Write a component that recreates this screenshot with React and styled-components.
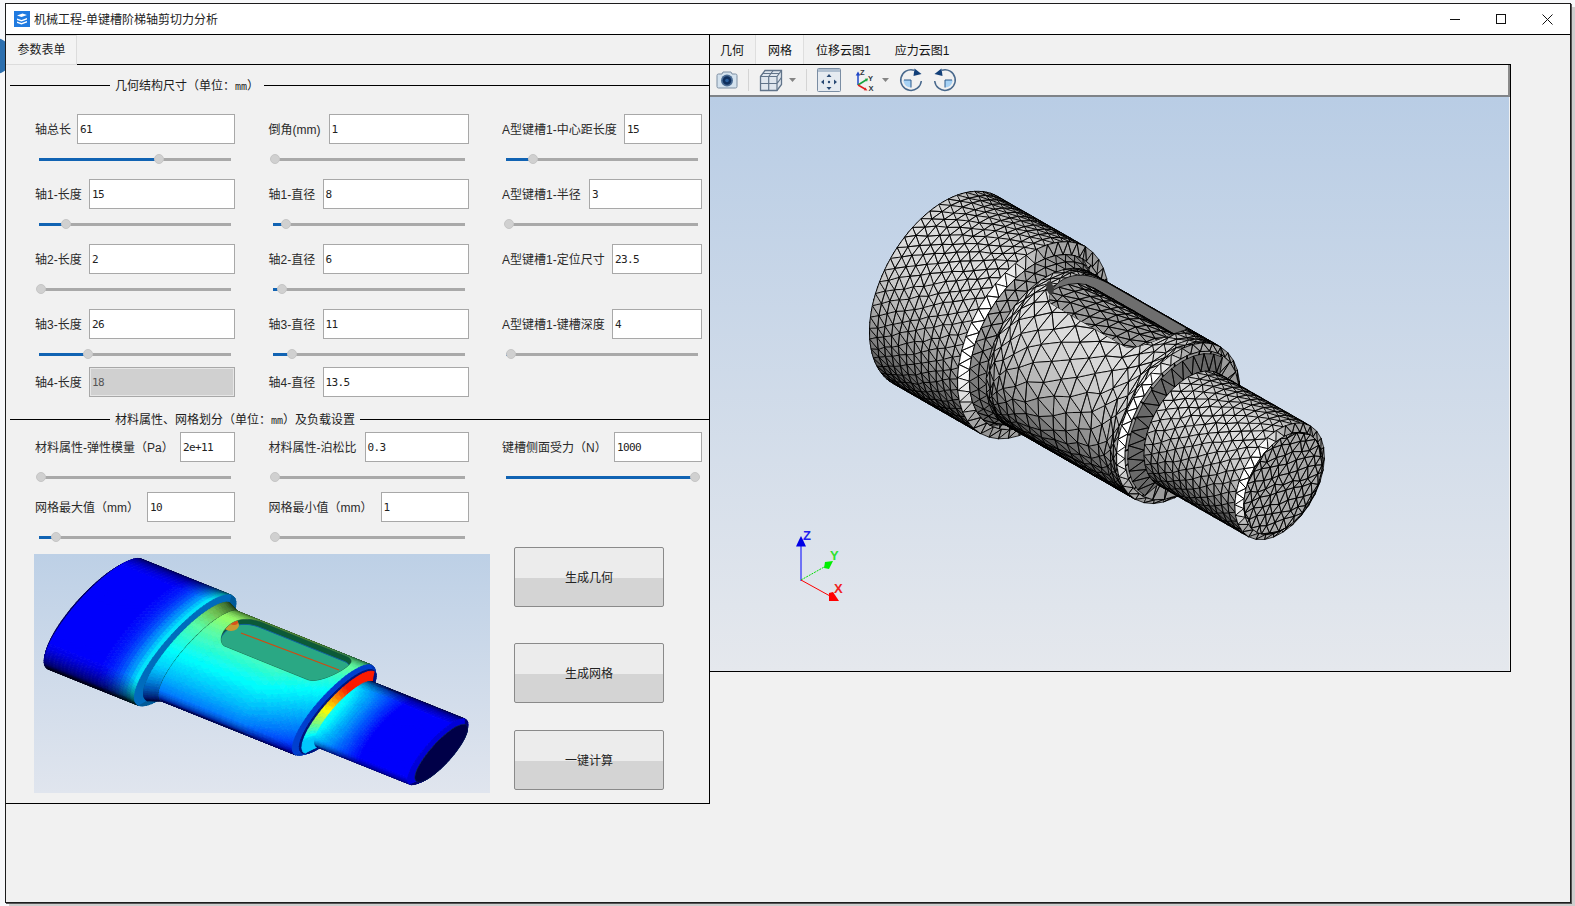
import React from 'react';
import styled, { createGlobalStyle } from 'styled-components';

const FONT = '"Liberation Sans", "Noto Sans CJK SC", sans-serif';

const GlobalStyle = createGlobalStyle`
	html, body {
		margin: 0;
		width: 1575px;
		height: 906px;
		overflow: hidden;
		background: #f7f8fa;
		font-family: ${FONT};
		font-size: 12px;
		color: #1c1c1c;
	}
	* {
		box-sizing: border-box;
	}
`;

const Desktop = styled.div`
	position: relative;
	width: 1575px;
	height: 906px;
	padding: 3px 0 0 5px;
`;

const DesktopBlob = styled.div`
	position: absolute;
	left: -22px;
	top: 38px;
	width: 34px;
	height: 36px;
	border-radius: 50%;
	background: #2c6fae;
`;

const Window = styled.div`
	position: relative;
	display: flex;
	flex-direction: column;
	width: 1566px;
	height: 900px;
	border: 1px solid #1c1c1c;
	background: #f1f1f1;
	box-shadow: 1px 1px 0 #555, 4px 4px 0 #cdcdcd;
`;

const TitleBar = styled.div`
	display: flex;
	align-items: center;
	flex: none;
	height: 31px;
	padding-left: 8px;
	background: #fff;
	border-bottom: 1px solid #000;
`;

const AppIcon = styled.svg`
	flex: none;
	width: 16px;
	height: 16px;
	margin-right: 4px;
`;

const TitleText = styled.span`
	padding-bottom: 2px;
	font-size: 12px;
	color: #222;
`;

const CaptionButtons = styled.div`
	display: flex;
	margin-left: auto;
`;

const CaptionButton = styled.div`
	display: flex;
	align-items: center;
	justify-content: center;
	width: 46px;
	height: 30px;
`;

const WindowBody = styled.div`
	display: flex;
	flex: 1;
	min-height: 0;
`;

const FormPanel = styled.div`
	flex: none;
	width: 704px;
	height: 769px;
	border-right: 1px solid #000;
	border-bottom: 1px solid #000;
`;

const FormTabBar = styled.div`
	display: flex;
	height: 30px;
	border-bottom: 1px solid #000;
`;

const FormTab = styled.div`
	display: flex;
	align-items: center;
	justify-content: center;
	width: 71px;
	height: 30px;
	padding: 0 0 3px 1px;
	background: #f3f3f3;
	border: 1px solid #dcdcdc;
	border-left: none;
	font-size: 12px;
`;

const Legend = styled.div`
	display: flex;
	align-items: center;
	height: 16px;
	margin: ${(p) => p.$top}px 0 0 4px;
`;

const LegendRule = styled.div`
	flex: ${(p) => (p.$grow ? 1 : 'none')};
	width: 100px;
	height: 1px;
	background: #000;
`;

const LegendText = styled.div`
	padding: 0 5px 2px;
	font-size: 12px;
	white-space: nowrap;
`;

const Mm = styled.span`
	font-family: "DejaVu Sans Mono", monospace;
	font-size: 10px;
	color: #1c1c1c;
`;

const FieldGrid = styled.div`
	display: grid;
	grid-template-columns: repeat(3, 200px);
	grid-template-rows: ${(p) => p.$rows};
	column-gap: 33.5px;
	margin-top: ${(p) => p.$top}px;
	padding-left: 29px;
`;

const Field = styled.div`
	display: flex;
	flex-direction: column;
`;

const FieldTop = styled.div`
	display: flex;
	align-items: center;
	height: 30px;
`;

const FieldLabel = styled.div`
	flex: none;
	width: ${(p) => p.$width}px;
	padding-bottom: 2px;
	font-size: 12px;
	color: #2a2a2a;
	white-space: nowrap;
`;

const ValueBox = styled.div`
	flex: 1;
	height: 30px;
	padding: 0 2px;
	line-height: 29px;
	font-family: "DejaVu Sans Mono", monospace;
	font-size: 11px;
	letter-spacing: -0.6px;
	background: ${(p) => (p.$disabled ? '#d0d0d0' : '#fff')};
	border: 1px solid #a8a8a8;
	box-shadow: ${(p) => (p.$disabled ? 'inset 0 0 0 1px #e6e6e6' : 'none')};
	color: ${(p) => (p.$disabled ? '#555' : '#222')};
`;

const SliderTrack = styled.div`
	position: relative;
	height: 3px;
	margin: 13.5px 4px 0;
	background: linear-gradient(to right, #1163b3 ${(p) => p.$at}px, #a9a9a9 ${(p) => p.$at}px);
`;

const SliderThumb = styled.div`
	position: absolute;
	top: -3.5px;
	left: ${(p) => p.$at - 5}px;
	width: 10px;
	height: 10px;
	border-radius: 50%;
	background: #d0d0d0;
	border: 1px solid #c6c6c6;
`;

const BottomArea = styled.div`
	display: flex;
	padding-left: 28px;
`;

const PreviewBox = styled.div`
	flex: none;
	width: 456px;
	height: 239px;
	margin-top: 7px;
	background: linear-gradient(#bdd0e6, #e0e5ee);
`;

const ActionColumn = styled.div`
	display: flex;
	flex-direction: column;
	margin-left: 24px;
`;

const ActionButton = styled.div`
	display: flex;
	align-items: center;
	justify-content: center;
	width: 150px;
	height: 60px;
	margin-top: ${(p) => p.$top}px;
	padding-bottom: 2px;
	border: 1px solid #8a8a8a;
	border-radius: 2px;
	background: linear-gradient(#ececec 0, #ececec 52%, #d4d4d4 52%, #d4d4d4 100%);
	font-size: 12px;
	color: #222;
`;

const ViewColumn = styled.div`
	display: flex;
	flex-direction: column;
	flex: none;
	width: 801px;
`;

const ViewTabBar = styled.div`
	display: flex;
	gap: 1px;
	height: 29px;
	margin-left: -2px;
`;

const ViewTab = styled.div`
	display: flex;
	align-items: center;
	height: 29px;
	padding: 0 11px 1px 12px;
	font-size: 12px;
	color: #111;
	background: ${(p) => (p.$active ? '#f5f5f5' : 'transparent')};
	border-left: 1px solid ${(p) => (p.$active ? '#dedede' : 'transparent')};
	border-right: 1px solid ${(p) => (p.$active ? '#dedede' : 'transparent')};
	margin: 0 -1px;
`;

const ViewFrame = styled.div`
	display: flex;
	flex-direction: column;
	width: 801px;
	height: 608px;
	border-top: 1px solid #000;
	border-right: 1px solid #000;
	border-bottom: 1px solid #000;
`;

const Toolbar = styled.div`
	display: flex;
	align-items: center;
	flex: none;
	height: 32px;
	padding-left: 5px;
	background: #f1f1f1;
	border-right: 2px solid #8a8a8a;
	border-bottom: 2px solid #7f8388;
`;

const ToolSeparator = styled.div`
	flex: none;
	width: 1px;
	height: 22px;
	margin-left: ${(p) => p.$left}px;
	background: #d4d4d4;
`;

const Tool = styled.svg`
	flex: none;
	width: ${(p) => p.$width || 24}px;
	height: 24px;
	margin-left: ${(p) => p.$left || 0}px;
`;

const Viewport = styled.div`
	flex: 1;
	min-height: 0;
	margin-right: 1px;
	background: linear-gradient(#b9cde5, #e5e8ed);
`;

const Drawing = styled.svg`
	display: block;
	width: 100%;
	height: 100%;
`;

/* ---- stepped shaft, drawn from a small parametric model ---- */

const TAU = Math.PI * 2;
const clamp = (v, a = 0, b = 1) => Math.min(b, Math.max(a, v));

const meshView = { o: [936.7, 285], a: [5.64, 3.23], u: [7.75, -13.85], k: [8.1, 4.64] };
const colorView = { o: [86.3, 610.7], a: [5.78, 2.32], u: [6.9, -8.15], k: [3.0, 1.2] };

const project = (v, s, r, th) => [
	v.o[0] + s * v.a[0] + r * Math.cos(th) * v.u[0] - r * Math.sin(th) * v.k[0],
	v.o[1] + s * v.a[1] + r * Math.cos(th) * v.u[1] - r * Math.sin(th) * v.k[1],
];

const seeded = (seed) => () => {
	seed = (seed * 16807) % 2147483647;
	return seed / 2147483647 - 0.5;
};

const fmt = (p) => `${p[0].toFixed(1)} ${p[1].toFixed(1)}`;

const addTri = (groups, fill, a, b, c) => {
	groups.set(fill, (groups.get(fill) || '') + `M${fmt(a)}L${fmt(b)}L${fmt(c)}Z`);
};

const buildStrip = (view, part, density, paint, wobble, rnd) => {
	const { id, s0, s1, r0, r1, full, ns, nt, bunch } = part;
	const rows = Math.max(1, Math.round(ns * density));
	const cols = Math.round(nt * density);
	const span = full ? TAU : Math.PI;
	const mapS = (t) => (bunch ? t - 0.11 * Math.sin(TAU * t) : t);
	const mapT = (t) => (bunch ? t - 0.09 * Math.sin(TAU * t) : t);
	const grid = [];
	for (let i = 0; i <= rows; i++) {
		const line = [];
		for (let j = 0; j <= cols + 1; j++) {
			const idx = clamp((i % 2 ? j - 0.5 : j) / cols);
			const inner = i > 0 && i < rows && idx > 0 && idx < 1;
			const t = mapS(i / rows) + (inner ? (rnd() * wobble) / rows : 0);
			const th = span * (mapT(idx) + (inner ? (rnd() * wobble) / cols : 0));
			line.push({ s: s0 + (s1 - s0) * t, r: r0 + (r1 - r0) * t, th });
		}
		grid.push(line);
	}
	const groups = new Map();
	const put = (a, b, c) => {
		if (a.th === b.th && b.th === c.th) return;
		const th = (a.th + b.th + c.th) / 3;
		const s = (a.s + b.s + c.s) / 3;
		addTri(groups, paint(id, th, s), project(view, a.s, a.r, a.th), project(view, b.s, b.r, b.th), project(view, c.s, c.r, c.th));
	};
	for (let i = 0; i < rows; i++) {
		for (let j = 0; j <= cols; j++) {
			const p = grid[i];
			const q = grid[i + 1];
			if (i % 2 === 0) {
				put(p[j], p[j + 1], q[j + 1]);
				put(q[j], q[j + 1], p[j]);
			} else {
				put(p[j], p[j + 1], q[j]);
				put(q[j], q[j + 1], p[j + 1]);
			}
		}
	}
	return groups;
};

// triangles on a flat plane, pulled onto a circle at the rim (end cap)
const buildCap = (view, s, radius, cell, paint, rnd) => {
	const groups = new Map();
	const n = Math.ceil(radius / cell) + 1;
	const table = {};
	const at = (ix, iy) => {
		const key = `${ix},${iy}`;
		if (!table[key]) {
			let x = (ix + (iy % 2 ? 0.5 : 0)) * cell + rnd() * 0.35 * cell;
			let y = iy * cell * 0.87 + rnd() * 0.35 * cell;
			const d = Math.hypot(x, y);
			const out = d > radius;
			if (out) {
				x = (x / d) * radius;
				y = (y / d) * radius;
			}
			table[key] = { out, p: project(view, s, Math.hypot(x, y), Math.atan2(y, x)) };
		}
		return table[key];
	};
	const fill = paint('cap', 0, s);
	const put = (a, b, c) => {
		if (a.out && b.out && c.out) return;
		addTri(groups, fill, a.p, b.p, c.p);
	};
	for (let iy = -n; iy < n; iy++) {
		for (let ix = -n; ix < n; ix++) {
			if (iy % 2 !== 0) {
				put(at(ix, iy), at(ix + 1, iy), at(ix + 1, iy + 1));
				put(at(ix, iy), at(ix + 1, iy + 1), at(ix, iy + 1));
			} else {
				put(at(ix, iy), at(ix + 1, iy), at(ix, iy + 1));
				put(at(ix + 1, iy), at(ix + 1, iy + 1), at(ix, iy + 1));
			}
		}
	}
	return groups;
};

const shaftParts = [
	{ id: 'rear', s0: 1, s1: 1.5, r0: 6.2, r1: 6.75, ns: 1, nt: 26 },
	{ id: 'cyl', s0: 1.5, s1: 17.1, r0: 6.75, r1: 6.75, ns: 12, nt: 26 },
	{ id: 'bright', s0: 17.1, s1: 17.7, r0: 6.75, r1: 6, ns: 1, nt: 44, full: true },
	{ id: 'face', s0: 17.7, s1: 17.7, r0: 6, r1: 4.6, ns: 1, nt: 36, full: true },
	{ id: 'neck', s0: 17.7, s1: 19.7, r0: 6, r1: 5.5, ns: 2, nt: 20 },
	{ id: 'mid', s0: 19.7, s1: 42.8, r0: 5.5, r1: 5.5, ns: 16, nt: 20, bunch: true },
	{ slot: true },
	{ id: 'bright2', s0: 42.8, s1: 43.5, r0: 5.5, r1: 5.1, ns: 1, nt: 36, full: true },
	{ id: 'face2', s0: 43.5, s1: 43.5, r0: 5.1, r1: 3, ns: 1, nt: 28, full: true },
	{ id: 'groove', s0: 43.8, s1: 44.7, r0: 5, r1: 4, ns: 1, nt: 16 },
	{ id: 'end', s0: 44.7, s1: 60.8, r0: 4, r1: 4, ns: 13, nt: 16 },
	{ id: 'bright3', s0: 60.8, s1: 61.4, r0: 4, r1: 3.5, ns: 1, nt: 30, full: true },
	{ cap: true, s: 61.4, r: 3.5 },
];

const grayFill = (g) => {
	const v = clamp(Math.round(g / 5) * 5, 0, 255);
	return `rgb(${v},${v},${v})`;
};

const cylLight = (th) => clamp(Math.cos(th - 1.22));

const meshPaint = (id, th) => {
	switch (id) {
		case 'rear':
			return grayFill(80 + 60 * cylLight(th));
		case 'bright':
		case 'bright2':
		case 'bright3': {
			if (th > Math.PI) return grayFill(150 - 25 * Math.sin(th));
			const lit = clamp(Math.cos(th - 1.75) * 2.2 - 1);
			return grayFill(165 + 95 * lit);
		}
		case 'face':
		case 'face2':
			return grayFill(155);
		case 'cap':
			return grayFill(172);
		case 'neck':
			return grayFill(95 + 70 * cylLight(th));
		case 'groove':
			return grayFill(105);
		default:
			return grayFill(75 + 145 * cylLight(th));
	}
};

const jet = (v) => [
	clamp(1.5 - Math.abs(4 * v - 3)),
	clamp(1.5 - Math.abs(4 * v - 2)),
	clamp(1.5 - Math.abs(4 * v - 1)),
];

const jetFill = (v, light) => {
	const c = jet(v).map((x) => clamp(Math.round((x * light * 255) / 9) * 9, 0, 255));
	return `rgb(${c[0]},${c[1]},${c[2]})`;
};

const midValue = (th, s) => {
	const t = th / Math.PI;
	const fade = clamp((s - 34) / 9) * 0.06;
	return Math.min(0.52, 0.62 - 0.46 * t) - fade;
};

const colorPaint = (id, th, s) => {
	const t = th / Math.PI;
	const light = clamp(0.1 + 1.3 * Math.max(0, Math.cos(th - 1.45)));
	switch (id) {
		case 'rear':
			return jetFill(0.125, 0.4);
		case 'cyl': {
			const rise = clamp((s - 10) / 7);
			return jetFill(0.125 + 0.24 * rise * rise, light);
		}
		case 'bright':
			return jetFill(0.27, th > Math.PI ? 0.6 : 0.75);
		case 'face':
			return jetFill(0.28, 0.6);
		case 'neck':
			return jetFill(midValue(th, s), clamp(0.2 + 0.9 * Math.sin(th)));
		case 'mid':
			return jetFill(midValue(th, s), clamp(0.3 + 1.3 * Math.sin(th)));
		case 'bright2':
			return jetFill(0.2, th > Math.PI ? 0.7 : 0.8);
		case 'face2':
			return jetFill(0.16, 0.5);
		case 'groove':
			return jetFill(clamp(1 - 1.1 * (t - 0.18), 0.32, 0.85), 1);
		case 'end': {
			const near = clamp(1 - (s - 44.7) / 8);
			return jetFill(0.125 + 0.27 * near * Math.sin(th) ** 0.5, clamp(0.3 + 1.15 * Math.sin(th - 0.08)));
		}
		case 'bright3':
			return jetFill(0.125, th > Math.PI ? 0.45 : 0.85);
		default:
			return '#00f';
	}
};

const slotOutline = (view, slot) => {
	const pts = [];
	const half = slot.hw;
	for (let i = 0; i <= 40; i++) {
		const a = (i / 40) * TAU;
		const left = Math.cos(a) < 0;
		const s = (left ? slot.s0 + half : slot.s1 - half) + half * Math.cos(a);
		const th = slot.th + Math.asin(clamp((half * Math.sin(a)) / slot.r, -0.99, 0.99));
		pts.push(project(view, s, slot.r, th));
	}
	return pts.map(fmt).join(' ');
};

// keyway floor: a flat strip just under the surface, meshed like the rest
const buildFloor = (view, slot, fill, rnd) => {
	const sunk = {
		o: [
			view.o[0] - 0.9 * (Math.cos(slot.th) * view.u[0] - Math.sin(slot.th) * view.k[0]),
			view.o[1] - 0.9 * (Math.cos(slot.th) * view.u[1] - Math.sin(slot.th) * view.k[1]),
		],
		a: view.a,
		u: view.u,
		k: view.k,
	};
	const part = { id: 'floor', s0: slot.s0 - 1, s1: slot.s1 + 1, r0: slot.r, r1: slot.r, ns: 11, nt: 20 };
	const groups = buildStrip(sunk, part, 1, () => fill, 0.3, rnd);
	return groups;
};

const toPaths = (groups, stroke, width, crisp) =>
	[...groups.entries()].map(([fill, d]) => (
		<path
			key={fill}
			d={d}
			fill={fill}
			stroke={stroke || fill}
			strokeWidth={width}
			strokeLinejoin="round"
			shapeRendering={crisp ? 'crispEdges' : undefined}
		/>
	));

const meshSlot = { s0: 21.5, s1: 39.5, th: 0.6, r: 5.5, hw: 2.6 };
const colorSlot = { s0: 22, s1: 41.5, th: 0.72, r: 5.5, hw: 2.7 };

const MeshShaft = () => {
	const rnd = seeded(20231);
	return shaftParts.map((part, n) => {
		if (part.slot) {
			const outline = slotOutline(meshView, meshSlot);
			return (
				<g key={n}>
					<clipPath id="mesh-slot">
						<polygon points={outline} />
					</clipPath>
					<polygon points={outline} fill="#6e6e6e" stroke="#000" strokeWidth="0.8" />
					<g clipPath="url(#mesh-slot)">{toPaths(buildFloor(meshView, meshSlot, '#9a9a9a', rnd), '#000', 0.8, true)}</g>
					<ellipse cx="1050" cy="288" rx="3.500" ry="7" fill="#3a3a3a" transform="rotate(-12 1050 288)" />
				</g>
			);
		}
		if (part.cap) {
			return <g key={n}>{toPaths(buildCap(meshView, part.s, part.r, 0.78, meshPaint, rnd), '#000', 0.8, true)}</g>;
		}
		const wobble = part.id === 'mid' ? 0.42 : 0.18;
		return <g key={n}>{toPaths(buildStrip(meshView, part, 1, meshPaint, wobble, rnd), '#000', 0.8, true)}</g>;
	});
};

const ColorShaft = () => {
	const rnd = seeded(77);
	const rimLine = (s, r, turn) => {
		const pts = [];
		for (let i = 0; i <= 60; i++) pts.push(project(colorView, s, r, (i / 60) * turn));
		return pts.map(fmt).join(' ');
	};
	return shaftParts.map((part, n) => {
		if (part.slot) {
			const outline = slotOutline(colorView, colorSlot);
			return (
				<g key={n}>
					<clipPath id="color-slot">
						<polygon points={outline} />
					</clipPath>
					<polygon points={outline} fill="#0b5a38" stroke="#124a3a" strokeWidth="0.6" />
					<g clipPath="url(#color-slot)">
						<polygon points={outline} fill="#2aa884" stroke="#1060a0" strokeWidth="1" transform="translate(-2 5)" />
						<line x1="241" y1="633" x2="339" y2="670" stroke="#d04a10" strokeWidth="1.300" />
						<ellipse cx="231" cy="625" rx="8" ry="6" fill="#c89a30" />
						<ellipse cx="234" cy="622" rx="4" ry="3" fill="#d8501a" />
					</g>
				</g>
			);
		}
		if (part.cap) {
			return null;
		}
		const density = part.id === 'cyl' ? 2 : part.id === 'end' ? 2.5 : part.id === 'mid' ? 2.5 : 2;
		const bright = part.id === 'bright' || part.id === 'bright2' || part.id === 'bright3';
		return (
			<g key={n}>
				{toPaths(buildStrip(colorView, part, density, colorPaint, 0, rnd), null, 0.7, false)}
				{bright && (
					<polygon points={rimLine(part.s1, part.r1, TAU)} fill={part.id === 'bright3' ? '#000048' : 'none'} stroke="#06283c" strokeWidth="0.5" />
				)}
				{part.id === 'neck' && <polyline points={rimLine(part.s1, part.r1, Math.PI)} fill="none" stroke="#07381f" strokeWidth="1.200" />}
			</g>
		);
	});
};

const Triad = () => (
	<g fontFamily='"Liberation Sans", sans-serif' fontWeight="700" fontSize="13">
		<line x1="801" y1="581" x2="801" y2="545" stroke="#0000ff" strokeWidth="1" />
		<path d="M801 536l2 4 3 6.500h-10l3-6.500z" fill="#0000e6" />
		<text x="803" y="540" fill="#2020f0">Z</text>
		<line x1="801" y1="580" x2="826" y2="566" stroke="#00e000" strokeWidth="1" strokeDasharray="2 1" />
		<path d="M825 562l8-1-4 8-5-1z" fill="#00f000" />
		<text x="830" y="560" fill="#30e030">Y</text>
		<line x1="801" y1="580" x2="830" y2="596" stroke="#ff0000" strokeWidth="1" />
		<path d="M829 593l4-1 6 9h-10z" fill="#ff0000" />
		<text x="834" y="593" fill="#f02020">X</text>
	</g>
);

const CameraTool = () => (
	<Tool viewBox="0 0 24 24">
		<path d="M2 7.500a1.500 1.500 0 0 1 1.500-1.500H7l1-2h8l1 2h3.500A1.500 1.500 0 0 1 22 7.500v11a1.500 1.500 0 0 1-1.500 1.500h-17A1.500 1.500 0 0 1 2 18.500z" fill="#d4e2ee" stroke="#7d8ea2" />
		<circle cx="12" cy="12.500" r="6" fill="#4b6c94" />
		<circle cx="12" cy="12.500" r="4.300" fill="#0f2f5e" />
		<circle cx="12" cy="12.500" r="1.800" fill="#2a5f9e" />
	</Tool>
);

const BoxTool = () => (
	<Tool $left={10} viewBox="0 0 24 24">
		<path d="M1.500 8.500L6 2.500h16.500v14L18 22.500H1.500z" fill="#dfe6ee" stroke="#61748a" strokeWidth="1.300" />
		<path d="M1.500 8.500H18V22.500M18 8.500L22.500 2.500M9.700 8.500V22.500M1.500 15.500H18M14.200 2.500L9.700 8.500M18 15.500L22.500 9.500M4 5.500H20.500" fill="none" stroke="#61748a" strokeWidth="1.200" />
	</Tool>
);

const Caret = ({ left }) => (
	<Tool $left={left} $width={9} viewBox="0 0 9 24">
		<path d="M1 10h7l-3.500 4z" fill="#848484" />
	</Tool>
);

const FitTool = () => (
	<Tool $left={10} viewBox="0 0 24 24">
		<rect x="0.500" y="0.500" width="23" height="23" rx="1" fill="#e6ebf1" stroke="#7a8da3" />
		<rect x="1" y="1" width="22" height="3" fill="#b0bfd0" />
		<g fill="#2a4a74">
			<circle cx="12" cy="14" r="1.200" />
			<path d="M12 6l2.500 3h-5zM12 22l-2.500-3h5zM4 14l3-2.500v5zM20 14l-3 2.500v-5z" />
		</g>
	</Tool>
);

const AxesTool = () => (
	<Tool $left={13} $width={22} viewBox="0 0 22 24">
		<path d="M4 17V7" stroke="#1f47c8" strokeWidth="1.500" />
		<path d="M4 3.500l2.300 4h-4.600z" fill="#1f47c8" />
		<path d="M4 17l8-5" stroke="#15a33c" strokeWidth="1.500" />
		<path d="M14 10.500l-1 3.200-2.200-3z" fill="#15a33c" />
		<path d="M4 17l7 4" stroke="#e02020" strokeWidth="1.500" />
		<path d="M13.500 22.500l-3.700-.2 1.500-2.800z" fill="#e02020" />
		<g fontFamily='"Liberation Sans", sans-serif' fontSize="7.500" fill="#30363e" fontWeight="700">
			<text x="6" y="6.500">Z</text>
			<text x="14" y="12.500">Y</text>
			<text x="14.500" y="22.500">X</text>
		</g>
	</Tool>
);

const RotateTool = ({ flip, left }) => (
	<Tool $left={left} viewBox="0 0 24 24">
		<g transform={flip ? 'translate(24 0) scale(-1 1)' : undefined}>
			<path d="M12 12H4.500v1.500a8 8 0 0 0 7.500 6z" fill="#a7d2f5" />
			<path d="M5 12h7v7.500" fill="none" stroke="#2d5b8c" strokeWidth="1" />
			<path d="M15 2.200A10.300 10.300 0 1 0 22.300 13" fill="none" stroke="#48688c" strokeWidth="1.500" />
			<path d="M15.500.500L22.500 6 14.500 8z" fill="#123f78" />
		</g>
	</Tool>
);

const geometryRows = [
	[
		{ label: '轴总长', value: '61', width: 42, at: 120 },
		{ label: '倒角(mm)', value: '1', width: 60, at: 2 },
		{ label: 'A型键槽1-中心距长度', value: '15', width: 122, at: 27 },
	],
	[
		{ label: '轴1-长度', value: '15', width: 54, at: 27 },
		{ label: '轴1-直径', value: '8', width: 54, at: 13 },
		{ label: 'A型键槽1-半径', value: '3', width: 87, at: 3 },
	],
	[
		{ label: '轴2-长度', value: '2', width: 54, at: 2 },
		{ label: '轴2-直径', value: '6', width: 54, at: 9 },
		{ label: 'A型键槽1-定位尺寸', value: '23.5', width: 110 },
	],
	[
		{ label: '轴3-长度', value: '26', width: 54, at: 49 },
		{ label: '轴3-直径', value: '11', width: 54, at: 19 },
		{ label: 'A型键槽1-键槽深度', value: '4', width: 110, at: 5 },
	],
	[
		{ label: '轴4-长度', value: '18', width: 54, disabled: true },
		{ label: '轴4-直径', value: '13.5', width: 54 },
	],
];

const materialRows = [
	[
		{ label: '材料属性-弹性模量（Pa）', value: '2e+11', width: 145, at: 2 },
		{ label: '材料属性-泊松比', value: '0.3', width: 96, at: 2 },
		{ label: '键槽侧面受力（N）', value: '1000', width: 112, at: 189 },
	],
	[
		{ label: '网格最大值（mm）', value: '10', width: 112, at: 17 },
		{ label: '网格最小值（mm）', value: '1', width: 112, at: 2 },
	],
];

const FieldCell = ({ label, value, width, at, disabled }) => (
	<Field>
		<FieldTop>
			<FieldLabel $width={width}>{label}</FieldLabel>
			<ValueBox $disabled={disabled}>{value}</ValueBox>
		</FieldTop>
		{at !== undefined && (
			<SliderTrack $at={at}>
				<SliderThumb $at={at} />
			</SliderTrack>
		)}
	</Field>
);

const App = () => {
	return (
		<Desktop>
			<GlobalStyle />
			<DesktopBlob />
			<Window>
				<TitleBar>
					<AppIcon viewBox="0 0 16 16">
						<rect width="16" height="16" fill="#1f7ae0" />
						<path d="M3 4.500L8.500 2.500l4.500 1.500-5.500 2zM3 7.500l4.500 1.500 5.500-2v1.500l-5.500 2-4.500-1.500zM3 10.500l4.500 1.500 5.500-2v1.500l-5.500 2-4.500-1.500z" fill="#fff" />
					</AppIcon>
					<TitleText>机械工程-单键槽阶梯轴剪切力分析</TitleText>
					<CaptionButtons>
						<CaptionButton>
							<svg width="10" height="10" viewBox="0 0 10 10">
								<path d="M0 5.500h10" stroke="#111" />
							</svg>
						</CaptionButton>
						<CaptionButton>
							<svg width="10" height="10" viewBox="0 0 10 10">
								<rect x="0.500" y="0.500" width="9" height="9" fill="none" stroke="#111" />
							</svg>
						</CaptionButton>
						<CaptionButton>
							<svg width="11" height="11" viewBox="0 0 11 11">
								<path d="M.5.500l10 10M10.500.500l-10 10" stroke="#111" />
							</svg>
						</CaptionButton>
					</CaptionButtons>
				</TitleBar>
				<WindowBody>
					<FormPanel>
						<FormTabBar>
							<FormTab>参数表单</FormTab>
						</FormTabBar>
						<Legend $top={12}>
							<LegendRule />
							<LegendText>
								几何结构尺寸（单位：<Mm>mm</Mm>）
							</LegendText>
							<LegendRule $grow />
						</Legend>
						<FieldGrid $top={21} $rows="65px 65px 65px 58px 44px">
							{geometryRows.flat().map((f) => (
								<FieldCell key={f.label} {...f} />
							))}
						</FieldGrid>
						<Legend $top={0}>
							<LegendRule />
							<LegendText>
								材料属性、网格划分（单位：<Mm>mm</Mm>）及负载设置
							</LegendText>
							<LegendRule $grow />
						</Legend>
						<FieldGrid $top={5} $rows="60px 55px">
							{materialRows.flat().map((f) => (
								<FieldCell key={f.label} {...f} />
							))}
						</FieldGrid>
						<BottomArea>
							<PreviewBox>
								<Drawing viewBox="34 554 456 239">
									<ColorShaft />
								</Drawing>
							</PreviewBox>
							<ActionColumn>
								<ActionButton $top={0}>生成几何</ActionButton>
								<ActionButton $top={36}>生成网格</ActionButton>
								<ActionButton $top={27}>一键计算</ActionButton>
							</ActionColumn>
						</BottomArea>
					</FormPanel>
					<ViewColumn>
						<ViewTabBar>
							<ViewTab>几何</ViewTab>
							<ViewTab $active>网格</ViewTab>
							<ViewTab>位移云图1</ViewTab>
							<ViewTab>应力云图1</ViewTab>
						</ViewTabBar>
						<ViewFrame>
							<Toolbar>
								<CameraTool />
								<ToolSeparator $left={9} />
								<BoxTool />
								<Caret left={5} />
								<ToolSeparator $left={9} />
								<FitTool />
								<AxesTool />
								<Caret left={5} />
								<RotateTool left={9} />
								<RotateTool flip left={10} />
							</Toolbar>
							<Viewport>
								<Drawing viewBox="710 97 799 574">
									<MeshShaft />
									<Triad />
								</Drawing>
							</Viewport>
						</ViewFrame>
					</ViewColumn>
				</WindowBody>
			</Window>
		</Desktop>
	);
};

export default App;
